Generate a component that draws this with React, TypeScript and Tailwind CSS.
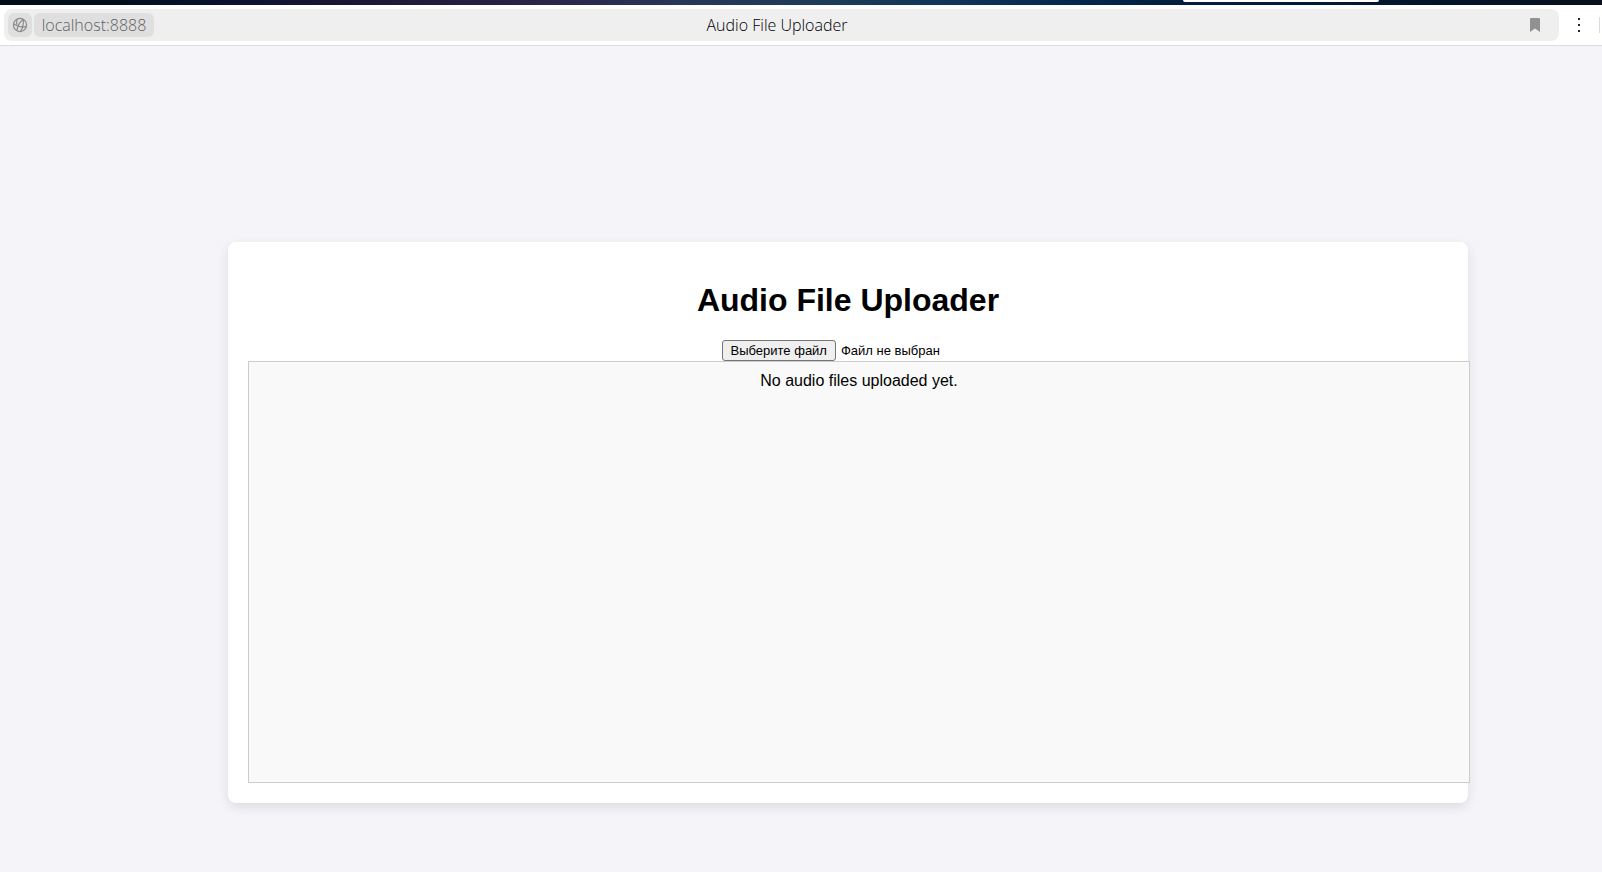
import { useRef, useState } from "react";

function GlobeIcon() {
  return (
    <svg viewBox="0 0 16 16" className="size-4" fill="none" stroke="#8a8a8a" strokeWidth="1.2" aria-hidden="true">
      <circle cx="8" cy="8" r="6.6" />
      <path d="M11.2 2.2C8 4.6 5.6 9 4.8 13.6" />
      <path d="M11.2 2.2c.6 4-.2 8.400-2.600 12.200" />
      <path d="M1.6 6.600c3.400 2.800 7.800 3.800 12.300 3" />
      <path d="M5 2.200C4.600 3.800 4.500 5.600 4.800 7.600" />
    </svg>
  );
}

function BrowserBar() {
  return (
    <header>
      <div className="flex h-[5px] items-start bg-[linear-gradient(90deg,#030d17_0%,#02101e_8%,#0a1230_14%,#1d1735_23%,#2b2348_33%,#293657_42%,#1c3c57_52%,#0e3558_60%,#042a50_66%,#021f3e_73%,#021a33_82%,#03142a_90%,#0a101c_100%)]">
        <div className="ml-[1183px] h-0.5 w-[196px] rounded-b-sm bg-white" />
      </div>
      <div className="flex h-[41px] items-center border-b border-[#dcdce0] bg-white pl-1 pr-0.5">
        <div className="flex h-8 min-w-0 flex-1 items-center rounded-lg bg-[#efefef] pl-1 pr-[13px] font-['Open_Sans','Noto_Sans',sans-serif] text-base">
          <div className="flex flex-1 items-center gap-0.5">
            <button type="button" aria-label="Site information" className="flex size-6 items-center justify-center rounded-md bg-[#dfdfdf]">
              <GlobeIcon />
            </button>
            <a href="#" className="flex h-6 w-[120px] items-center justify-center whitespace-nowrap rounded-md bg-[#dfdfdf] font-light text-[#606060]">
              localhost:8888
            </a>
          </div>
          <p className="whitespace-nowrap font-light text-black">Audio File Uploader</p>
          <div className="flex flex-1 justify-end">
            <button type="button" aria-label="Bookmark" className="mr-1.5 flex items-center">
              <svg viewBox="0 0 10 14" className="h-3.5 w-2.5" fill="#919191" aria-hidden="true">
                <path d="M0 1.2Q0 0 1.2 0H8.8Q10 0 10 1.2V14L5 10.4L0 14Z" />
              </svg>
            </button>
          </div>
        </div>
        <button type="button" aria-label="Menu" className="mx-[19px] flex flex-col gap-1">
          <span className="size-0.5 bg-[#222]" />
          <span className="size-0.5 bg-[#222]" />
          <span className="size-0.5 bg-[#222]" />
        </button>
        <div className="h-4 w-px bg-[#dcdcdc]" />
      </div>
    </header>
  );
}

function FilePicker({ fileName, onPick }: { fileName: string; onPick: (name: string) => void }) {
  const input = useRef<HTMLInputElement>(null);
  return (
    <div className="flex w-[253px] items-center gap-[5px] text-[13px] leading-[15px]">
      <button
        type="button"
        onClick={() => input.current?.click()}
        className="h-[21px] whitespace-nowrap rounded-[3px] border border-[#767676] bg-[#efefef] px-2 text-black"
      >
        Выберите файл
      </button>
      <label htmlFor="audio-file" className="truncate">
        {fileName || "Файл не выбран"}
      </label>
      <input
        ref={input}
        id="audio-file"
        type="file"
        accept="audio/*"
        className="hidden"
        onChange={(e) => onPick(e.target.files?.[0]?.name ?? "")}
      />
    </div>
  );
}

export default function App() {
  const [fileName, setFileName] = useState("");
  return (
    <div className="flex min-h-screen flex-col bg-[#f4f4f9] font-['Liberation_Sans',Arial,sans-serif] text-black">
      <BrowserBar />
      <main className="flex-1 pb-16 pl-[228px] pr-[134px] pt-[196px]">
        <section className="flex flex-col items-center rounded-lg bg-white p-5 shadow-[0_4px_12px_rgba(0,0,0,0.1)]">
          <h1 className="mb-[21px] mt-5 text-[32px] font-bold leading-[37px]">Audio File Uploader</h1>
          <FilePicker fileName={fileName} onPick={setFileName} />
          <div className="box-content h-[400px] w-full self-start border border-[#cccccc] bg-[#f9f9f9] p-2.5 text-center text-base leading-[18px]">
            <p>{fileName || "No audio files uploaded yet."}</p>
          </div>
        </section>
      </main>
    </div>
  );
}
